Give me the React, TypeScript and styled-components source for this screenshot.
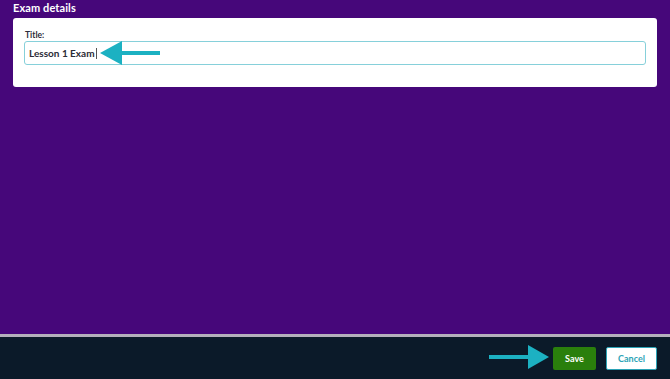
import React from "react";
import styled, { createGlobalStyle } from "styled-components";

const Global = createGlobalStyle`
  html, body { margin: 0; padding: 0; }
  body {
    background: #46077a;
    font-family: Lato, Inter, "Noto Sans", "Liberation Sans", sans-serif;
    width: 670px;
    height: 379px;
    overflow: hidden;
  }
`;

const Page = styled.div`
  display: flex;
  flex-direction: column;
  height: 379px;
`;

const Main = styled.main`
  flex: 1;
  padding: 2px 13px 0 13px;
  display: flex;
  flex-direction: column;
`;

const Heading = styled.h2`
  margin: 0 0 4px 0;
  color: #ffffff;
  font-size: 11px;
  font-weight: 700;
  line-height: 12px;
  letter-spacing: 0.1px;
`;

const Card = styled.section`
  position: relative;
  background: #ffffff;
  border-radius: 3px;
  padding: 12px 11px 22px 11px;
  display: flex;
  flex-direction: column;
  gap: 1px;
`;

const Label = styled.label`
  font-size: 8.5px;
  font-weight: 700;
  color: #2d2d3a;
  line-height: 10px;
  padding-left: 1px;
`;

const InputBox = styled.div`
  height: 24px;
  box-sizing: border-box;
  border: 1.5px solid #86d0da;
  border-radius: 3px;
  display: flex;
  align-items: center;
  padding: 0 4px;
  font-size: 10px;
  font-weight: 700;
  color: #2b2b35;
`;

const Caret = styled.span`
  display: inline-block;
  width: 1px;
  height: 11px;
  background: #555;
  margin-left: 1px;
`;

const Footer = styled.footer`
  height: 42px;
  border-top: 3px solid #b4b0bb;
  background: #0b1a29;
  display: flex;
  align-items: center;
  justify-content: flex-end;
  gap: 10px;
  padding: 0 13px 0 0;
  position: relative;
`;

const Button = styled.button<{ $variant: "primary" | "secondary" }>`
  font-family: inherit;
  font-size: 9px;
  font-weight: 700;
  height: 23px;
  border-radius: 2px;
  cursor: pointer;
  box-sizing: border-box;
  ${(p) =>
    p.$variant === "primary"
      ? `background:#2a7f0c; color:#ffffff; border:none; width:43px;`
      : `background:#ffffff; color:#2ba3b6; border:1.5px solid #2ba3b6; width:51px;`}
`;

const Arrow = styled.svg`
  position: absolute;
  pointer-events: none;
`;

export default function App() {
  return (
    <>
      <Global />
      <Page>
        <Main>
          <Heading>Exam details</Heading>
          <Card>
            <Label>Title:</Label>
            <InputBox>
              Lesson 1 Exam
              <Caret />
            </InputBox>
            <Arrow
              width="62"
              height="24"
              viewBox="0 0 62 24"
              style={{ left: 87, top: 23 }}
            >
              <polygon points="0,12 22,0 22,24" fill="#1cb1c2" />
              <rect x="21" y="10" width="39" height="4" fill="#1cb1c2" />
            </Arrow>
          </Card>
        </Main>
        <Footer>
          <Arrow
            width="60"
            height="24"
            viewBox="0 0 60 24"
            style={{ left: 489, top: 8 }}
          >
            <rect x="0" y="10" width="41" height="4" fill="#1cb1c2" />
            <polygon points="39,0 60,12 39,24" fill="#1cb1c2" />
          </Arrow>
          <Button $variant="primary">Save</Button>
          <Button $variant="secondary">Cancel</Button>
        </Footer>
      </Page>
    </>
  );
}
